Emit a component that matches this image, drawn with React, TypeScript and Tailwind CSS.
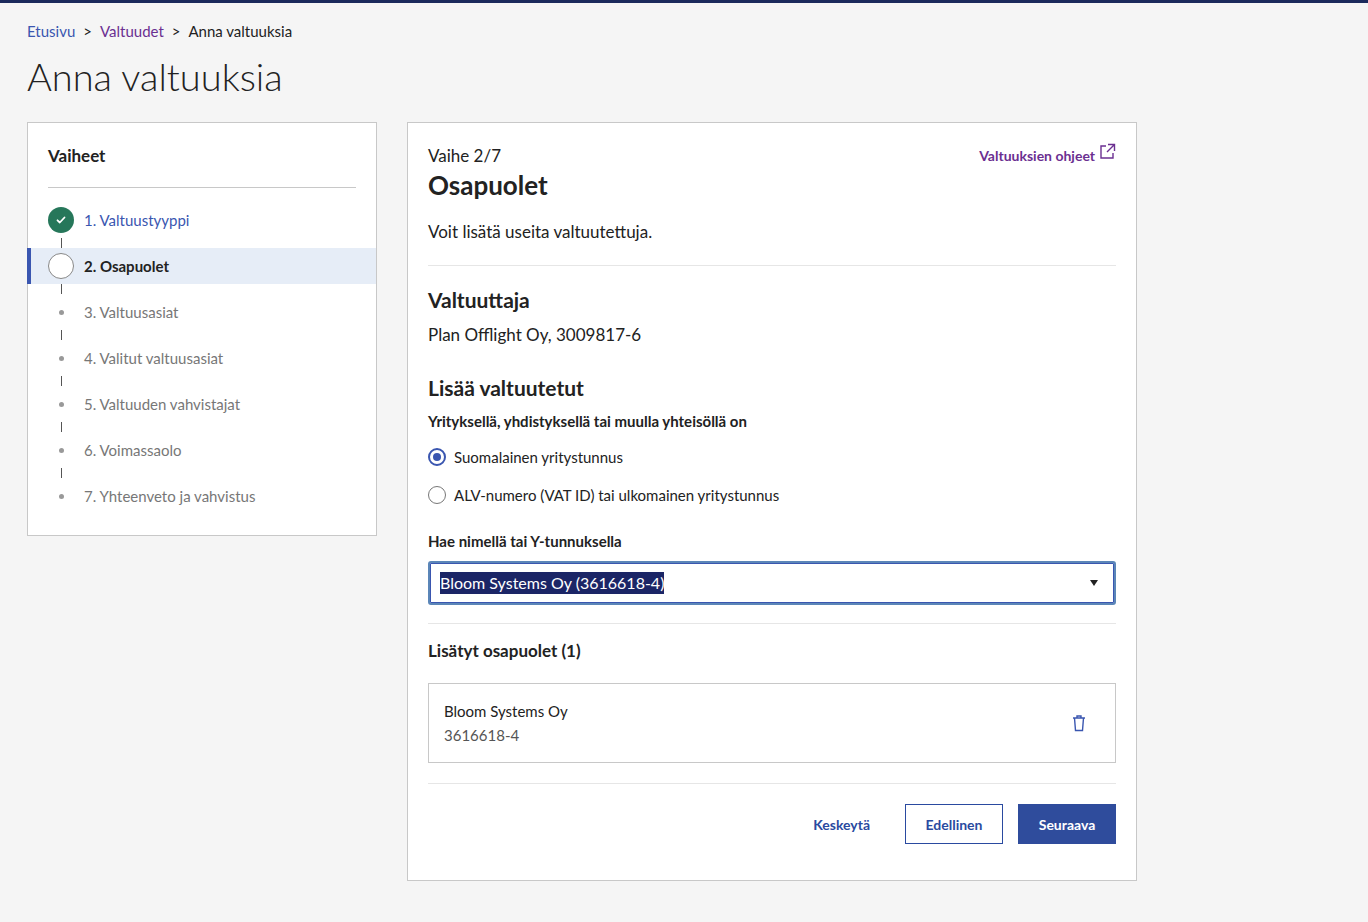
import React from "react";

const steps = ["3. Valtuusasiat", "4. Valitut valtuusasiat", "5. Valtuuden vahvistajat", "6. Voimassaolo", "7. Yhteenveto ja vahvistus"];

function Connector() {
  return <div className="h-[10px] ml-[33px] w-px bg-[#555]" />;
}

export default function App() {
  return (
    <div className="min-h-[922px] bg-[#f5f5f5] border-t-[3px] border-[#1b2a5c] text-[#222]" style={{ fontFamily: "Lato, 'Open Sans', sans-serif" }}>
      <div className="pl-[27px] pt-[18px]">
        <div className="text-[15px] flex gap-[8px] items-center h-[20px]">
          <span className="text-[#3a56b0]">Etusivu</span>
          <span>&gt;</span>
          <span className="text-[#6b2f91]">Valtuudet</span>
          <span>&gt;</span>
          <span>Anna valtuuksia</span>
        </div>
        <h1 className="text-[38px] font-light mt-[12px] leading-[46px]">Anna valtuuksia</h1>
        <div className="flex gap-[30px] mt-[23px] items-start">
          <div className="w-[350px] h-[414px] bg-white border border-[#c8c8c8]">
            <div className="px-[20px] pt-[20px]">
              <div className="text-[17px] font-bold h-[24px]">Vaiheet</div>
              <div className="h-px bg-[#c8c8c8] mt-[20px]" />
            </div>
            <div className="mt-[14px]">
              <div className="h-[36px] flex items-center pl-[20px]">
                <div className="w-[26px] h-[26px] rounded-full bg-[#26775a] flex items-center justify-center">
                  <svg width="12" height="12" viewBox="0 0 12 12"><path d="M2.5 6.3l2.3 2.2 4.7-5" stroke="white" strokeWidth="1.8" fill="none" strokeLinecap="round" strokeLinejoin="round" /></svg>
                </div>
                <span className="ml-[10px] text-[15px] text-[#3a56b0]">1. Valtuustyyppi</span>
              </div>
              <Connector />
              <div className="h-[36px] flex items-center pl-[20px] bg-[#e6edf7] border-l-[4px] border-[#3a56b0] -ml-px">
                <div className="w-[26px] h-[26px] rounded-full bg-white border border-[#888] -ml-[3px]" />
                <span className="ml-[10px] text-[15px] font-bold">2. Osapuolet</span>
              </div>
              {steps.map((s) => (
                <React.Fragment key={s}>
                  <Connector />
                  <div className="h-[36px] flex items-center pl-[20px]">
                    <div className="w-[26px] flex justify-center"><div className="w-[5px] h-[5px] rounded-full bg-[#999]" /></div>
                    <span className="ml-[10px] text-[15px] text-[#777]">{s}</span>
                  </div>
                </React.Fragment>
              ))}
            </div>
          </div>
          <div className="w-[730px] h-[759px] bg-white border border-[#c8c8c8] px-[20px] pt-[22px]">
            <div className="flex justify-between">
              <div>
                <div className="text-[17px] leading-[22px]">Vaihe 2/7</div>
                <div className="text-[26px] font-bold leading-[32px] mt-[2px]">Osapuolet</div>
              </div>
              <div className="flex items-start gap-[4px] text-[#6b2f91] text-[14px] font-bold mt-[-2px]">
                <span className="mt-[2px]">Valtuuksien ohjeet</span>
                <svg width="17" height="17" viewBox="0 0 17 17" fill="none" stroke="#6b2f91" strokeWidth="1.4"><path d="M7 3H2v12h12v-5" /><path d="M9 1.5h6.5V8M15.5 1.5L8 9" /></svg>
              </div>
            </div>
            <div className="text-[17px] mt-[20px] leading-[22px]">Voit lisätä useita valtuutettuja.</div>
            <div className="h-px bg-[#e6e6e6] mt-[22px]" />
            <div className="text-[21px] font-bold mt-[21px] leading-[26px]">Valtuuttaja</div>
            <div className="text-[17px] mt-[11px] leading-[22px]">Plan Offlight Oy, 3009817-6</div>
            <div className="text-[21px] font-bold mt-[29px] leading-[26px]">Lisää valtuutetut</div>
            <div className="text-[15px] font-bold mt-[10px] leading-[20px]">Yrityksellä, yhdistyksellä tai muulla yhteisöllä on</div>
            <div className="flex items-center mt-[16px] h-[20px]">
              <div className="w-[18px] h-[18px] rounded-full border-2 border-[#3a56b0] flex items-center justify-center"><div className="w-[8px] h-[8px] rounded-full bg-[#3a56b0]" /></div>
              <span className="ml-[8px] text-[15px]">Suomalainen yritystunnus</span>
            </div>
            <div className="flex items-center mt-[18px] h-[20px]">
              <div className="w-[18px] h-[18px] rounded-full border border-[#777]" />
              <span className="ml-[8px] text-[15px]">ALV-numero (VAT ID) tai ulkomainen yritystunnus</span>
            </div>
            <div className="text-[15px] font-bold mt-[26px] leading-[20px]">Hae nimellä tai Y-tunnuksella</div>
            <div className="mt-[10px] h-[44px] border-2 border-[#5b86b8] rounded-[3px] flex items-center px-[10px] justify-between shadow-[inset_0_0_0_1px_#3a56b0]">
              <span className="text-[16px] bg-[#1b2566] text-white leading-[22px]">Bloom Systems Oy (3616618-4)</span>
              <svg width="10" height="8" viewBox="0 0 10 8" className="mr-[5px]"><path d="M1 1h8L5 7z" fill="#222" /></svg>
            </div>
            <div className="h-px bg-[#e6e6e6] mt-[18px]" />
            <div className="text-[17px] font-bold mt-[16px] leading-[22px]">Lisätyt osapuolet (1)</div>
            <div className="mt-[21px] h-[80px] border border-[#c8c8c8] flex items-center justify-between px-[15px]">
              <div>
                <div className="text-[15px] leading-[20px]">Bloom Systems Oy</div>
                <div className="text-[15px] text-[#555] mt-[4px] leading-[20px]">3616618-4</div>
              </div>
              <svg width="14" height="18" viewBox="0 0 14 18" fill="none" stroke="#3a56b0" strokeWidth="1.4" className="mr-[14px]"><path d="M1 4h12M5 4V2h4v2M2.5 4l1 12.5h7L11.5 4" /></svg>
            </div>
            <div className="h-px bg-[#e6e6e6] mt-[20px]" />
            <div className="flex justify-end items-center gap-[15px] mt-[20px]">
              <span className="text-[14px] font-bold text-[#2a4aa0] mr-[20px]">Keskeytä</span>
              <div className="w-[98px] h-[40px] border border-[#2a4aa0] flex items-center justify-center text-[14px] font-bold text-[#2a4aa0]">Edellinen</div>
              <div className="w-[98px] h-[40px] bg-[#2f4c9c] flex items-center justify-center text-[14px] font-bold text-white">Seuraava</div>
            </div>
          </div>
        </div>
      </div>
    </div>
  );
}
